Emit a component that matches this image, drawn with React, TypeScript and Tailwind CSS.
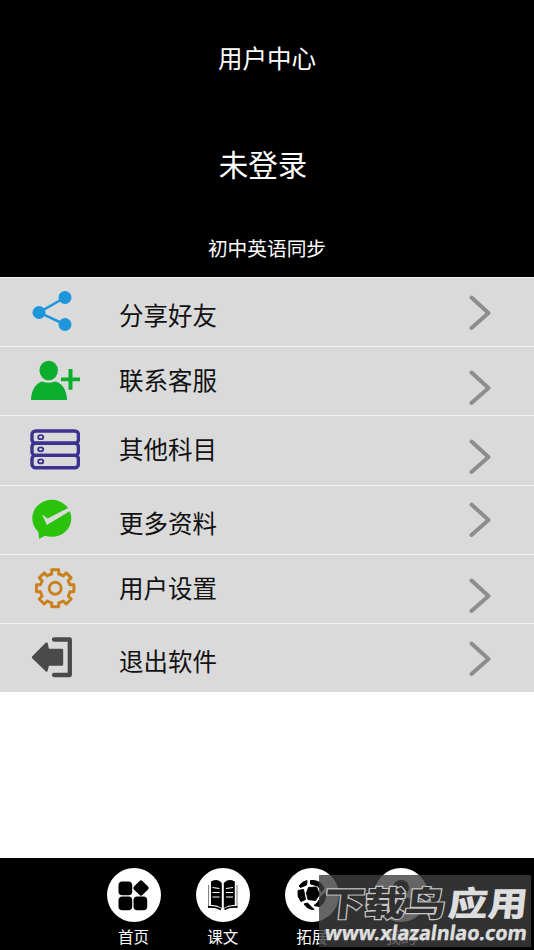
import type { ReactNode } from "react";

function ShareIcon() {
  return (
    <svg className="h-[42px] w-[50px]" viewBox="30 289.5 50 42">
      <path d="M65 297 39 312 65 324" fill="none" stroke="#1e96dc" strokeWidth="2.5" />
      <g fill="#1e96dc">
        <circle cx="65" cy="297" r="6.5" />
        <circle cx="39" cy="312" r="6.5" />
        <circle cx="65" cy="324" r="6.5" />
      </g>
    </svg>
  );
}

function ContactIcon() {
  return (
    <svg className="h-[42px] w-[50px]" viewBox="30 359 50 42" fill="#0aae2c">
      <ellipse cx="48.7" cy="370.5" rx="9.2" ry="9.8" />
      <path d="M31 400C31.500 388 37 382.500 42.500 381.500Q48.700 384 55 381.500C61 382.500 66.500 388 67.200 400Z" />
      <path d="M68.500 369h4v8.500H80v3.700h-7.500v8.500h-4v-8.500H61v-3.700h7.500z" />
    </svg>
  );
}

function ServerIcon() {
  return (
    <svg className="h-[42px] w-[50px]" viewBox="30 428.5 50 42" fill="none" stroke="#3d3290" strokeWidth="3.4">
      <rect x="32" y="431.500" width="46.400" height="12.200" rx="3.500" />
      <rect x="32" y="443.700" width="46.400" height="12.200" rx="3.500" />
      <rect x="32" y="455.900" width="46.400" height="12.400" rx="3.500" />
      <g strokeWidth="1.8">
        <ellipse cx="40.700" cy="437.700" rx="2.600" ry="2" />
        <ellipse cx="40.700" cy="449.800" rx="2.600" ry="2" />
        <ellipse cx="40.700" cy="461.900" rx="2.600" ry="2" />
      </g>
    </svg>
  );
}

function ChatCheckIcon() {
  return (
    <svg className="h-[42px] w-[50px]" viewBox="30 497 50 42">
      <ellipse cx="51.800" cy="517.300" rx="19.500" ry="18.500" fill="#2bc20b" />
      <path d="M38 528 39.200 538 47 533.500Z" fill="#2bc20b" />
      <path d="M42 513.200 47.500 517.500 67.500 507.300 72 505.500 71 509.500 46.800 524Z" fill="#dadada" />
    </svg>
  );
}

function GearIcon() {
  return (
    <svg className="h-[42px] w-[50px]" viewBox="30 567 50 42" fill="none" stroke="#cb801e" strokeWidth="2.900" strokeLinejoin="round">
      <path d="M51.700 569.800h7v4.200q2.500.6 4.500 1.900l3-3 5 5-3 3q1.100 1.900 1.700 3.900h4v7h-4q-.6 2.300-1.700 4.200l3 3-5 5-3-3q-2 1.200-4.500 1.800v4h-7v-4q-2.500-.6-4.500-1.800l-3 3-5-5 3-3q-1.100-1.900-1.700-4.200h-4v-7h4q.6-2 1.700-3.900l-3-3 5-5 3 3q2-1.300 4.500-1.900z" />
      <circle cx="55.200" cy="588.200" r="6" />
    </svg>
  );
}

function ExitIcon() {
  return (
    <svg className="h-[42px] w-[50px]" viewBox="30 636 50 42">
      <path d="M54 639.500H69.800V675H54" fill="none" stroke="#4a4a4a" strokeWidth="4.300" strokeLinecap="round" strokeLinejoin="round" />
      <path d="M33 657.300 46.500 643.500 48 650H62V664.500H48L46.500 670.500Z" fill="#4a4a4a" stroke="#4a4a4a" strokeWidth="2.400" strokeLinejoin="round" />
    </svg>
  );
}

type Item = { label: string; icon: ReactNode; text: string; arrow: string };

const items: Item[] = [
  { label: "分享好友", icon: <ShareIcon />, text: "pt-[19px]", arrow: "pt-[17px]" },
  { label: "联系客服", icon: <ContactIcon />, text: "pt-[15px]", arrow: "pt-[23px]" },
  { label: "其他科目", icon: <ServerIcon />, text: "pt-[15px]", arrow: "pt-[23px]" },
  { label: "更多资料", icon: <ChatCheckIcon />, text: "pt-[19px]", arrow: "pt-[16px]" },
  { label: "用户设置", icon: <GearIcon />, text: "pt-[15px]", arrow: "pt-[23px]" },
  { label: "退出软件", icon: <ExitIcon />, text: "pt-[19px]", arrow: "pt-[17px]" },
];

function Row({ item }: { item: Item }) {
  return (
    <li className="flex h-[69.200px] items-start border-t-[1.500px] border-[#f2f2f2] bg-[#dadada] pl-[30px] pr-[43px]">
      <span className="pt-[12px]">{item.icon}</span>
      <span className={`ml-[39px] text-[24.500px] leading-[36px] text-[#111] ${item.text}`}>{item.label}</span>
      <span className={`ml-auto ${item.arrow}`}>
        <svg className="h-[36px] w-[22px]" viewBox="0 0 22 36" fill="none" stroke="#8d8d8d" strokeWidth="4" strokeLinecap="round" strokeLinejoin="round">
          <path d="M2.500 2.500 19.500 18 2.500 33" />
        </svg>
      </span>
    </li>
  );
}

function GridIcon() {
  return (
    <svg className="size-[54px]" viewBox="0 0 54 54">
      <rect x="11.500" y="13.500" width="13.700" height="13.700" rx="3.800" />
      <rect x="11.500" y="28.500" width="13.700" height="13.700" rx="3.800" />
      <rect x="26.500" y="28.500" width="13.700" height="13.700" rx="3.800" />
      <rect x="28" y="14" width="12" height="12" rx="2" transform="rotate(45 34 20)" />
    </svg>
  );
}

function BookIcon() {
  return (
    <svg className="size-[54px]" viewBox="0 0 54 54">
      <path d="M15 13.500Q22 10 25.800 15V40Q21 36.500 15 37ZM27.800 15Q32 10 38.800 13.500V37Q33 36.500 27.800 40Z" />
      <path d="M12.600 17V38M41 17V38" stroke="#777" strokeWidth="1" />
      <path d="M12 39Q20 38.500 25 41.500M28.500 41.500Q33 38.500 41.500 39" fill="none" stroke="#000" strokeWidth="1.800" />
      <path d="M16.500 19.500l7 1M16.500 24.500h7M16.500 29h7M30 20.500l7-1M30 24.500h7M30 29h7" stroke="#fff" strokeWidth="1.200" />
    </svg>
  );
}

function BallIcon() {
  return (
    <svg className="size-[54px]" viewBox="0 0 54 54" stroke="#000" strokeWidth="1" strokeLinejoin="round">
      <path d="M23.500 19.500 31.500 19 34.500 26.500 30.500 32.500 23 31.500 21.500 25Z" />
      <path d="M14 18Q17 13.500 22 12.500L21.500 17 15.500 19.500Z" />
      <path d="M25.500 12.500Q33 12 37 16.500L39 20 36.500 24 33 18 25.500 16Z" />
      <path d="M13 22.500 18.500 21.500 20.500 31.500 16 33.500Q12 29 13 22.500Z" />
      <path d="M36.500 28 40.500 25Q41.500 34 34.500 38.500L29 37.500 32.500 34.500Z" />
      <path d="M19 36 22.500 35 29 41.500Q22.500 41.500 19 36Z" />
    </svg>
  );
}

function PersonIcon() {
  return (
    <svg className="size-[54px]" viewBox="0 0 54 54">
      <circle cx="27" cy="20" r="8" />
      <path d="M12 42C12 32 18 29 27 29S42 32 42 42Z" />
    </svg>
  );
}

const tabs = [
  { label: "首页", icon: <GridIcon /> },
  { label: "课文", icon: <BookIcon /> },
  { label: "拓展", icon: <BallIcon /> },
  { label: "我的", icon: <PersonIcon /> },
];

function Watermark() {
  return (
    <div className="absolute left-[319px] top-[17px] h-[72px] w-[212px] bg-[#3e3e3e]/80">
      <svg className="h-full w-full" viewBox="319 875 212 72" fontFamily="'Noto Sans CJK SC', sans-serif" fontWeight="900">
        <g transform="translate(323 916) skewX(-6) scale(1.190 1)" fontSize="34">
          <text fill="#303030" stroke="#c6c6c6" strokeWidth="2.200" paintOrder="stroke">下载鸟</text>
        </g>
        <g transform="translate(447 916) skewX(-6) scale(1.170 1)" fontSize="34">
          <text fill="#dedede">应用</text>
        </g>
        <g transform="translate(324 940) skewX(-8)" fontSize="20" fontFamily="'Noto Sans', sans-serif" fontWeight="700">
          <text textLength="202" lengthAdjust="spacingAndGlyphs" fill="#dedede" stroke="#dedede" strokeWidth="0.400">www.xlazalnlao.com</text>
        </g>
      </svg>
    </div>
  );
}

export default function App() {
  return (
    <main className="flex h-[950px] w-[534px] flex-col overflow-hidden bg-white font-['Noto_Sans_CJK_SC',sans-serif]">
      <header className="flex h-[277px] shrink-0 flex-col items-center bg-black text-white">
        <h1 className="mt-[40px] text-[24.500px] leading-[36px]">用户中心</h1>
        <p className="mr-[8px] mt-[66px] text-[29.500px] leading-[42px]">未登录</p>
        <p className="mt-[49px] text-[19.700px] leading-[30px]">初中英语同步</p>
      </header>
      <ul className="flex flex-col">
        {items.map((item) => (
          <Row key={item.label} item={item} />
        ))}
      </ul>
      <nav className="relative mt-auto flex h-[92px] shrink-0 bg-black pl-[106.500px] pt-[10px] text-white">
        {tabs.map((tab) => (
          <div key={tab.label} className="mr-[35.200px] flex w-[54px] flex-col items-center">
            <span className="size-[54px] rounded-full bg-white">{tab.icon}</span>
            <span className="mt-[2px] text-[15.500px] leading-[24px]">{tab.label}</span>
          </div>
        ))}
        <Watermark />
      </nav>
    </main>
  );
}
